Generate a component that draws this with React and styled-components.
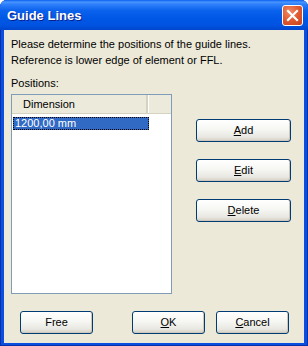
import React from "react"
import styled, { createGlobalStyle } from "styled-components"

const GlobalStyle = createGlobalStyle`
  html, body {
    margin: 0;
    padding: 0;
    background: #ffffff;
  }
  body {
    font-family: "Liberation Sans", Arial, sans-serif;
    font-size: 11px;
    color: #000;
  }
`

export default function App() {
  const rows = ["1200,00 mm"]
  return (
    <>
      <GlobalStyle />
      <Window>
        <TitleBar>
          <Title>Guide Lines</Title>
          <CloseButton aria-label="Close">
            <svg width="13" height="13" viewBox="0 0 13 13">
              <path d="M2 2 L11 11 M11 2 L2 11" stroke="#fff" strokeWidth="2.2" strokeLinecap="square" />
            </svg>
          </CloseButton>
        </TitleBar>
        <Body>
          <Intro>Please determine the positions of the guide lines.</Intro>
          <Intro>Reference is lower edge of element or FFL.</Intro>
          <Label>Positions:</Label>
          <Main>
            <ListBox>
              <Header>
                <HeaderCell $width={137}>Dimension</HeaderCell>
                <HeaderCell $width={22} />
              </Header>
              {rows.map((r, i) => (
                <Row key={r} $selected={i === 0}>{r}</Row>
              ))}
            </ListBox>
            <SideButtons>
              <Button $wide><u>A</u>dd</Button>
              <Button $wide><u>E</u>dit</Button>
              <Button $wide><u>D</u>elete</Button>
            </SideButtons>
          </Main>
          <Footer>
            <Button>Free</Button>
            <Spacer />
            <Button><u>O</u>K</Button>
            <Button><u>C</u>ancel</Button>
          </Footer>
        </Body>
      </Window>
    </>
  )
}

const Window = styled.div`
  width: 308px;
  height: 346px;
  display: flex;
  flex-direction: column;
  box-sizing: border-box;
  overflow: hidden;
  border-radius: 7px 7px 0 0;
  background: #0a4fe0;
  box-shadow: inset 1px 0 0 #0831a8, inset -1px 0 0 #0831a8, inset 0 -1px 0 #0831a8;
`

const TitleBar = styled.div`
  height: 30px;
  flex: none;
  display: flex;
  align-items: center;
  padding: 0 5px 0 7px;
  box-sizing: border-box;
  background: linear-gradient(
    to bottom,
    #0a5ff0 0%,
    #4a96ff 7%,
    #2f80fb 14%,
    #0b62ec 35%,
    #0058e6 60%,
    #0053e0 85%,
    #0044cc 100%
  );
`

const Title = styled.div`
  flex: 1;
  color: #fff;
  font-weight: bold;
  font-size: 13px;
  text-shadow: 1px 1px 0 #0a1e8c;
  margin-top: 1px;
`

const CloseButton = styled.div`
  width: 21px;
  height: 21px;
  box-sizing: border-box;
  border: 1px solid #fff;
  border-radius: 3px;
  background: radial-gradient(circle at 35% 30%, #f08b66 0%, #e05a30 50%, #c8401c 100%);
  display: flex;
  align-items: center;
  justify-content: center;
  margin-top: 1px;
`

const Body = styled.div`
  flex: 1;
  margin: 0 4px 3px 4px;
  background: #ece9d8;
  padding: 6px 7px 0 7px;
  display: flex;
  flex-direction: column;
`

const Intro = styled.div`
  line-height: 16px;
  white-space: nowrap;
`

const Label = styled.div`
  line-height: 16px;
  margin-top: 7px;
`

const Main = styled.div`
  display: flex;
  margin-top: 3px;
`

const ListBox = styled.div`
  width: 161px;
  height: 200px;
  box-sizing: border-box;
  border: 1px solid #7f9db9;
  background: #fff;
  padding: 0 1px;
`

const Header = styled.div`
  display: flex;
  height: 19px;
  border-bottom: 1px solid #d6d2c2;
  background: #ebeadb;
  box-sizing: border-box;
  margin: 0 -1px;
`

const HeaderCell = styled.div`
  width: ${(p) => p.$width}px;
  box-sizing: border-box;
  padding-left: 11px;
  line-height: 18px;
  border-right: 1px solid #ffffff;
  box-shadow: inset -2px 0 0 #d6d2c2;
  &:last-child {
    flex: 1;
    border-right: none;
    box-shadow: none;
  }
`

const Row = styled.div`
  width: 136px;
  height: 13px;
  margin-top: 3px;
  box-sizing: border-box;
  padding-left: 2px;
  line-height: 12px;
  color: ${(p) => (p.$selected ? "#fff" : "#000")};
  background: ${(p) => (p.$selected ? "#316ac5" : "transparent")};
  outline: ${(p) => (p.$selected ? "1px dotted #000" : "none")};
  outline-offset: -1px;
`

const SideButtons = styled.div`
  display: flex;
  flex-direction: column;
  gap: 17px;
  margin-left: 24px;
  padding-top: 25px;
`

const Button = styled.div`
  width: ${(p) => (p.$wide ? "95px" : "73px")};
  height: 23px;
  box-sizing: border-box;
  border: 1px solid #003c74;
  border-radius: 3px;
  background: linear-gradient(to bottom, #ffffff 0%, #f6f6f3 45%, #e9e8e2 80%, #d4cfc4 100%);
  box-shadow: inset -1px -1px 0 #cdc8bb;
  display: flex;
  align-items: center;
  justify-content: center;
  line-height: 13px;
  u {
    text-decoration: underline;
    text-underline-offset: 1px;
  }
`

const Footer = styled.div`
  display: flex;
  gap: 11px;
  margin-top: 17px;
  padding-left: 9px;
`

const Spacer = styled.div`
  width: 17px;
`
